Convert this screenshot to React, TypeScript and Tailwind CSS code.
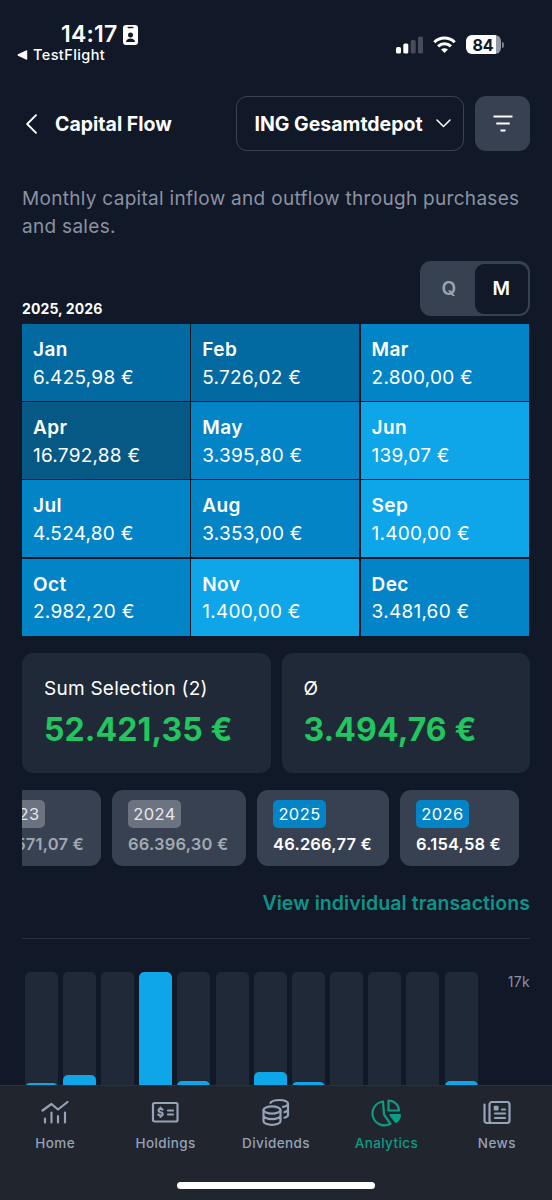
import type { ReactNode } from "react";
import clsx from "clsx";

const months = [
  { name: "Jan", value: "6.425,98 €", bg: "bg-[#0369a1]" },
  { name: "Feb", value: "5.726,02 €", bg: "bg-[#0369a1]" },
  { name: "Mar", value: "2.800,00 €", bg: "bg-[#0284c7]" },
  { name: "Apr", value: "16.792,88 €", bg: "bg-[#075985]" },
  { name: "May", value: "3.395,80 €", bg: "bg-[#0284c7]" },
  { name: "Jun", value: "139,07 €", bg: "bg-[#0ea5e9]" },
  { name: "Jul", value: "4.524,80 €", bg: "bg-[#0284c7]" },
  { name: "Aug", value: "3.353,00 €", bg: "bg-[#0284c7]" },
  { name: "Sep", value: "1.400,00 €", bg: "bg-[#0ea5e9]" },
  { name: "Oct", value: "2.982,20 €", bg: "bg-[#0284c7]" },
  { name: "Nov", value: "1.400,00 €", bg: "bg-[#0ea5e9]" },
  { name: "Dec", value: "3.481,60 €", bg: "bg-[#0284c7]" },
];

const years = [
  { year: "2023", value: "31.571,07 €", active: false, width: "w-[125px]" },
  { year: "2024", value: "66.396,30 €", active: false, width: "w-[134px]" },
  { year: "2025", value: "46.266,77 €", active: true, width: "w-[132px]" },
  { year: "2026", value: "6.154,58 €", active: true, width: "w-[119px]" },
];

// distance from the top of the track to the top of the bar, null = no bar
const bars = [111, 103, null, 0, 109, null, 100, 110, null, 112.5, null, 109];

function StatusBar() {
  return (
    <div className="flex h-[96px] items-start justify-between">
      <div className="pl-[17px] pt-[22px]">
        <div className="flex items-center gap-[6px] pl-[44px]">
          <span className="text-[23px] font-semibold leading-[25px] tracking-[0.2px]">14:17</span>
          <svg width="15" height="20" viewBox="0 0 15 20">
            <rect width="15" height="20" rx="3" fill="#fff" />
            <rect x="4.5" y="1.7" width="6" height="1.6" rx="0.8" fill="#111827" />
            <circle cx="7.5" cy="10" r="2.5" fill="#111827" />
            <path d="M3 17c0-2.400 2-3.600 4.500-3.600S12 14.600 12 17z" fill="#111827" />
          </svg>
        </div>
        <div className="flex items-center gap-[5px]">
          <svg width="11" height="10" viewBox="0 0 11 10">
            <path d="M1 4.300 9 .4q1.200-.5 1.200.7v7.800q0 1.200-1.200.7L1 5.700q-1-.7 0-1.400z" fill="#fff" />
          </svg>
          <span className="text-[14.500px] font-medium leading-[15px] tracking-[0.4px]">TestFlight</span>
        </div>
      </div>
      <div className="flex items-center gap-[10px] pr-[48px] pt-[35px]">
        <svg width="27" height="18" viewBox="0 0 27 18">
          <rect x="0" y="11" width="5" height="6.500" rx="1.500" fill="#fff" />
          <rect x="7.300" y="7.500" width="5" height="10" rx="1.500" fill="#fff" />
          <rect x="14.700" y="4" width="5" height="13.500" rx="1.500" fill="#474c59" />
          <rect x="22" y="0.500" width="5" height="17" rx="1.500" fill="#474c59" />
        </svg>
        <svg width="23" height="18" viewBox="0 0 23 18" fill="none" stroke="#fff" strokeWidth="3">
          <path d="M1.300 6.200a14.600 14.600 0 0 1 20.400 0" />
          <path d="M5.100 10.300a9.200 9.200 0 0 1 12.800 0" />
          <path d="m11.500 17 3.400-3.500a4.900 4.900 0 0 0-6.800 0z" fill="#fff" stroke="none" />
        </svg>
        <div className="flex items-center gap-[1.500px]">
          <div className="flex h-[19px] w-[35px] items-center justify-center rounded-[6px] bg-linear-to-r from-white from-85% to-[#9598a2] to-85% text-[16px] font-bold leading-none text-[#111827]">
            84
          </div>
          <div className="h-[6px] w-[2px] rounded-r-full bg-[#7c808b]" />
        </div>
      </div>
    </div>
  );
}

function Header() {
  return (
    <header className="flex h-[55px] items-center">
      <svg className="ml-[4px]" width="12" height="20" viewBox="0 0 12 20" fill="none" stroke="#fff" strokeWidth="1.900" strokeLinecap="round" strokeLinejoin="round">
        <path d="M10 1.200 1.200 10 10 18.800" />
      </svg>
      <h1 className="ml-[17px] flex-1 pt-[2px] text-[19.500px] font-bold">Capital Flow</h1>
      <button type="button" className="flex h-full w-[228px] items-center justify-between rounded-[11px] border-[1.500px] border-[#3b4352] pl-[17.500px] pr-[12px] text-[19.500px] font-bold">
        <span className="pt-[2px]">ING Gesamtdepot</span>
        <svg width="15" height="9" viewBox="0 0 15 9" fill="none" stroke="#fff" strokeWidth="1.500" strokeLinecap="round" strokeLinejoin="round">
          <path d="m1 1 6.500 6.500L14 1" />
        </svg>
      </button>
      <button type="button" className="ml-[11px] flex h-full w-[55px] items-center justify-center rounded-[11px] bg-[#374151]">
        <svg className="-mt-[1px]" width="20" height="17" viewBox="0 0 20 17" stroke="#fff" strokeWidth="1.900">
          <path d="M.5 1.500h19M3.300 8.500h13.400M7.500 15.500h5" />
        </svg>
      </button>
    </header>
  );
}

function SumCard({ label, value }: { label: string; value: string }) {
  return (
    <div className="h-[120px] flex-1 rounded-[11px] bg-[#1f2937] px-[22px] pt-[22px]">
      <p className="text-[19px] leading-[28px] tracking-[0.25px]">{label}</p>
      <p className="mt-[6px] text-[32px] font-bold leading-[42px] tracking-[0.1px] text-[#22c55e]">{value}</p>
    </div>
  );
}

function NavItem({ label, active, children }: { label: string; active?: boolean; children: ReactNode }) {
  return (
    <div className={clsx("flex flex-1 flex-col items-center pt-[12px]", active ? "text-[#0d9b84]" : "text-[#94a3b8]")}>
      <svg width="30" height="30" viewBox="0 0 30 30" fill="none" stroke="currentColor" strokeWidth="2.200" strokeLinecap="round" strokeLinejoin="round">
        {children}
      </svg>
      <span className="mt-[5px] text-[13.500px] font-medium leading-[20px] tracking-[0.4px]">{label}</span>
    </div>
  );
}

export default function App() {
  return (
    <div className="flex h-[1200px] w-[552px] flex-col overflow-hidden bg-[#111827] font-['Inter',sans-serif] text-white">
      <main className="h-[1085px] shrink-0 overflow-hidden">
        <StatusBar />
        <div className="px-[22px]">
          <Header />
          <p className="mt-[34px] text-[19px] leading-[27.500px] tracking-[0.3px] text-[#8b92a2]">
            Monthly capital inflow and outflow through purchases
            <br />
            and sales.
          </p>

          <div className="mt-[21px] flex h-[55px] items-end justify-between">
            <span className="text-[14px] font-bold leading-[15px] tracking-[0.1px]">2025, 2026</span>
            <div className="flex h-[55px] w-[110px] rounded-[11px] bg-[#374151] p-[2.500px] text-[19px] font-semibold">
              <span className="flex flex-1 items-center justify-center pt-[2px] text-[#9ca3af]">Q</span>
              <span className="flex flex-1 items-center justify-center rounded-[9px] bg-[#111827] pt-[2px]">M</span>
            </div>
          </div>

          <div className="mr-[1.500px] mt-[8px] grid h-[311.500px] grid-cols-3 grid-rows-4 gap-[1.400px]">
            {months.map((m) => (
              <div key={m.name} className={clsx("pl-[11px] pt-[12px] leading-[27.500px]", m.bg)}>
                <p className="text-[19px] font-semibold tracking-[0.4px]">{m.name}</p>
                <p className="text-[19px] tracking-[0.25px]">{m.value}</p>
              </div>
            ))}
          </div>

          <div className="mt-[17px] flex gap-[11px]">
            <SumCard label="Sum Selection (2)" value="52.421,35 €" />
            <SumCard label="Ø" value="3.494,76 €" />
          </div>

          {/* scrolled to the newest year, older ones run out on the left */}
          <div className="mt-[17px] flex justify-end gap-[11px] overflow-hidden pr-[11px]">
            {years.map((y) => (
              <div key={y.year} className={clsx("h-[76px] shrink-0 rounded-[11px] bg-[#374151] pl-[16px] pt-[10.500px]", y.width)}>
                <span
                  className={clsx(
                    "flex h-[28px] w-[53px] items-center justify-center rounded-[5px] text-[16.500px] tracking-[0.4px]",
                    y.active ? "bg-[#0284c7]" : "bg-[#6b7280] text-[#e5e7eb]",
                  )}
                >
                  {y.year}
                </span>
                <p className={clsx("mt-[5px] text-[16.500px] font-semibold leading-[22px] tracking-[0.2px]", !y.active && "text-[#a3a8b1]")}>
                  {y.value}
                </p>
              </div>
            ))}
          </div>

          <p className="mt-[23px] text-right text-[19.500px] font-semibold leading-[28px] tracking-[0.08px] text-[#0d9488]">
            View individual transactions
          </p>

          <div className="mt-[21.500px] border-t border-[#2a3240]" />

          <div className="mt-[33px] flex justify-between pl-[2.600px]">
            <div className="flex gap-[5.200px]">
              {bars.map((top, i) => (
                <div key={i} className="h-[150px] w-[33px] overflow-hidden rounded-t-[5px] bg-[#1f2937]">
                  {top !== null && <div className="h-full rounded-t-[5px] bg-[#0ea5e9]" style={{ marginTop: top }} />}
                </div>
              ))}
            </div>
            <span className="text-[14px] leading-[20px] tracking-[0.3px] text-[#8b92a2]">17k</span>
          </div>
        </div>
      </main>

      <nav className="flex h-[115px] shrink-0 flex-col bg-[#21252e]">
        <div className="flex h-[97px] border-t border-[#2a2f3b]">
          <NavItem label="Home">
            <path d="m2.500 12.500 9-6.500 6.500 5.500L27.500 4M5 20.500v4M11.500 14.500v10M18 18v6.500M25 14.500v10" />
          </NavItem>
          <NavItem label="Holdings">
            <rect x="2" y="5" width="24.500" height="18.500" rx="1.500" />
            <path d="M11.500 11.700c-1-1.300-4-1.200-4 .7 0 2.300 4.200 1.400 4.200 3.500 0 2-3.200 2-4.400.6M9.500 9.700v1M9.500 18v1M17 12.500h5M17 16.500h5" />
          </NavItem>
          <NavItem label="Dividends">
            <ellipse cx="11" cy="12" rx="8.500" ry="3.700" />
            <path d="M2.500 12v11.300c0 2 3.800 3.500 8.500 3.500s8.500-1.500 8.500-3.500V12M2.500 17.500c0 2 3.800 3.700 8.500 3.700s8.500-1.700 8.500-3.700" />
            <path d="M9.500 4.800C11 3 14.500 2 18.500 2c4.700 0 8.500 1.500 8.500 3.500s-2.500 3-5 3.400M27 5.500v11.500c0 1.200-1.300 2-3.500 2.700M27 11.200c0 1.300-1.300 2.300-3.500 2.900" />
          </NavItem>
          <NavItem label="Analytics" active>
            <g transform="translate(1 0)">
              <path d="M11 3.500a12 12 0 1 0 7.500 22.300L12 16.500z" />
              <path d="M16.500 2.500v10H27c0-5.500-5-10-10.500-10z" />
              <path d="M18.500 17H28c-.2 3-1.700 5.500-4 7.200z" fill="currentColor" />
            </g>
          </NavItem>
          <NavItem label="News">
            <rect x="7.500" y="4" width="20" height="21" rx="2.500" />
            <path d="M10 25H5a2.500 2.500 0 0 1-2.500-2.500v-16M13 15.500h10M13 20h10M20 11.500h3" />
            <rect x="12.800" y="8.800" width="2.700" height="2.700" fill="currentColor" />
          </NavItem>
        </div>
        <div className="mx-auto h-[7px] w-[198px] rounded-full bg-white" />
      </nav>
    </div>
  );
}
